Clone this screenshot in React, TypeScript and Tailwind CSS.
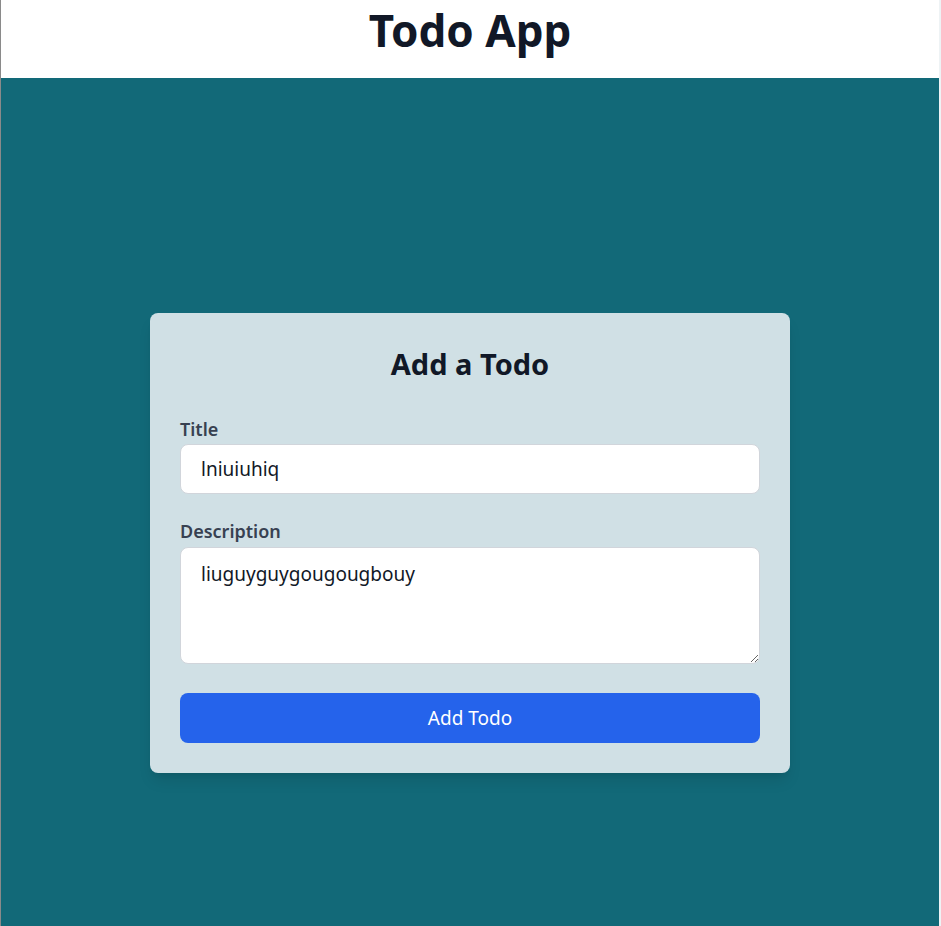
import React, { useState } from "react";

export default function App() {
  const [title, setTitle] = useState("lniuiuhiq");
  const [description, setDescription] = useState("liuguyguygougougbouy");

  return (
    <div
      className="h-[926px] overflow-hidden border-l border-r-2 border-l-[#8a8a8a] border-r-[#eef3f5] bg-white"
      style={{ fontFamily: '"Noto Sans", "Open Sans", sans-serif' }}
    >
      <header className="h-[78px] bg-white flex justify-center">
        <h1 className="text-[44px] leading-[60px] font-bold text-[#111827]">Todo App</h1>
      </header>

      <main className="min-h-screen pt-1 bg-[#126978] flex items-center justify-center">
        <form
          className="w-[640px] bg-[#d0e0e5] rounded-lg shadow-lg px-[30px] pt-[33px] pb-[30px]"
          onSubmit={(e) => e.preventDefault()}
        >
          <h2 className="text-[29px] leading-9 font-bold text-center text-[#111827] mb-[35px]">
            Add a Todo
          </h2>

          <div className="mb-[25px]">
            <label className="block text-lg leading-6 font-semibold text-[#374151] mb-[3px]">
              Title
            </label>
            <input
              type="text"
              value={title}
              onChange={(e) => setTitle(e.target.value)}
              className="w-full h-[50px] px-5 text-[19px] text-[#111827] bg-white border border-[#d1d5db] rounded-lg outline-none"
            />
          </div>

          <div className="mb-[29px]">
            <label className="block text-lg leading-6 font-semibold text-[#374151] mb-1">
              Description
            </label>
            <textarea
              value={description}
              onChange={(e) => setDescription(e.target.value)}
              className="block w-full h-[117px] px-5 py-3 text-[19px] leading-7 text-[#111827] bg-white border border-[#d1d5db] rounded-lg outline-none"
            />
          </div>

          <button
            type="submit"
            className="w-full h-[50px] bg-[#2563eb] text-white text-[19px] rounded-lg"
          >
            Add Todo
          </button>
        </form>
      </main>
    </div>
  );
}
